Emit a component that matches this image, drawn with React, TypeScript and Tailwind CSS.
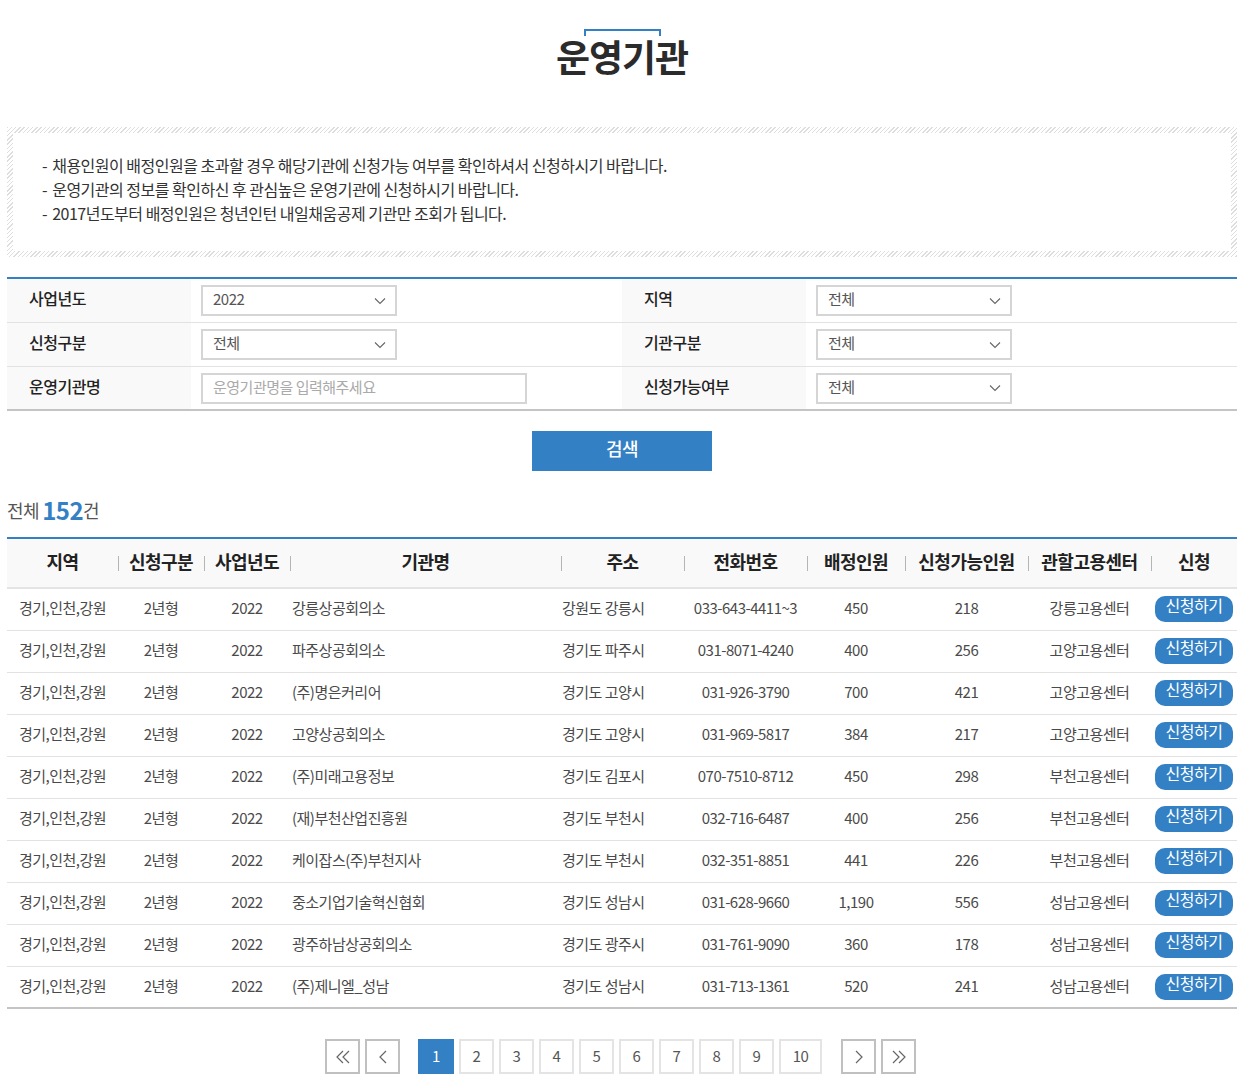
import React from "react";

const rows = [
  ["2022", "강릉상공회의소", "강원도 강릉시", "033-643-4411~3", "450", "218", "강릉고용센터"],
  ["2022", "파주상공회의소", "경기도 파주시", "031-8071-4240", "400", "256", "고양고용센터"],
  ["2022", "(주)명은커리어", "경기도 고양시", "031-926-3790", "700", "421", "고양고용센터"],
  ["2022", "고양상공회의소", "경기도 고양시", "031-969-5817", "384", "217", "고양고용센터"],
  ["2022", "(주)미래고용정보", "경기도 김포시", "070-7510-8712", "450", "298", "부천고용센터"],
  ["2022", "(재)부천산업진흥원", "경기도 부천시", "032-716-6487", "400", "256", "부천고용센터"],
  ["2022", "케이잡스(주)부천지사", "경기도 부천시", "032-351-8851", "441", "226", "부천고용센터"],
  ["2022", "중소기업기술혁신협회", "경기도 성남시", "031-628-9660", "1,190", "556", "성남고용센터"],
  ["2022", "광주하남상공회의소", "경기도 광주시", "031-761-9090", "360", "178", "성남고용센터"],
  ["2022", "(주)제니엘_성남", "경기도 성남시", "031-713-1361", "520", "241", "성남고용센터"],
];

const heads = [
  ["지역", "w-[111px]"],
  ["신청구분", "w-[86px]"],
  ["사업년도", "w-[86px]"],
  ["기관명", "w-[271px]"],
  ["주소", "w-[123px]"],
  ["전화번호", "w-[123px]"],
  ["배정인원", "w-[98px]"],
  ["신청가능인원", "w-[123px]"],
  ["관할고용센터", "w-[123px]"],
  ["신청", "w-[86px]"],
];

function FakeSelect({ value }: { value: string }) {
  return (
    <div className="flex h-[31px] w-[196px] items-center justify-between border-2 border-[#d5d5d5] pl-[10px] pr-[9px] text-[15px] text-[#555]">
      <span className="relative top-[-1px]">{value}</span>
      <svg width="12" height="8" viewBox="0 0 12 8" fill="none" stroke="#666" strokeWidth="1.1">
        <path d="M1 1.5 L6 6.5 L11 1.5" />
      </svg>
    </div>
  );
}

function Label({ children }: { children: React.ReactNode }) {
  return (
    <div className="flex items-center bg-[#f9f9f9] pb-[5px] pl-[22px] text-[16px] font-medium text-[#222]">
      {children}
    </div>
  );
}

function PageArrow({ d, className = "" }: { d: string; className?: string }) {
  return (
    <button className={`flex h-[35px] w-[35px] items-center justify-center border-2 border-[#c0c0c0] bg-white ${className}`}>
      <svg width="18" height="16" viewBox="0 0 18 16" fill="none" stroke="#666" strokeWidth="1.2">
        <path d={d} />
      </svg>
    </button>
  );
}

function Notice({ children }: { children: React.ReactNode }) {
  return (
    <p>
      <span className="mr-[2px]">-</span> {children}
    </p>
  );
}

export default function App() {
  return (
    <div className="h-[1085px] w-[1250px] overflow-hidden bg-white pl-[7px] font-['Noto_Sans_CJK_KR','Noto_Sans',sans-serif] tracking-[-0.5px] text-[#4a4a4a]">
      <div className="w-[1230px]">
        <div className="flex flex-col items-center pt-[29px]">
          <div className="h-[7px] w-[77px] border-x-2 border-t-2 border-[#3380c4]" />
          <h1 className="mt-[-8px] text-[37px] leading-[56px] font-bold tracking-[-1px] text-[#2b2b2b]">운영기관</h1>
        </div>

        <div className="mt-[43px] h-[130px] bg-[repeating-linear-gradient(135deg,#dedede_0,#dedede_1px,#ffffff_1px,#ffffff_3px)] p-[6px]">
          <div className="h-full bg-white pt-[20px] pl-[29px] text-[16px] leading-[24px] text-[#333]">
            <Notice>채용인원이 배정인원을 초과할 경우 해당기관에 신청가능 여부를 확인하셔서 신청하시기 바랍니다.</Notice>
            <Notice>운영기관의 정보를 확인하신 후 관심높은 운영기관에 신청하시기 바랍니다.</Notice>
            <Notice>2017년도부터 배정인원은 청년인턴 내일채움공제 기관만 조회가 됩니다.</Notice>
          </div>
        </div>

        <div className="mt-[20px] border-t-2 border-b-2 border-t-[#3380c4] border-b-[#c4c4c4]">
          <div className="grid h-[44px] grid-cols-[184px_431px_184px_431px] border-b border-[#e2e2e2]">
            <Label>사업년도</Label>
            <div className="flex items-center pl-[10px]"><FakeSelect value="2022" /></div>
            <Label>지역</Label>
            <div className="flex items-center pl-[10px]"><FakeSelect value="전체" /></div>
          </div>
          <div className="grid h-[44px] grid-cols-[184px_431px_184px_431px] border-b border-[#e2e2e2]">
            <Label>신청구분</Label>
            <div className="flex items-center pl-[10px]"><FakeSelect value="전체" /></div>
            <Label>기관구분</Label>
            <div className="flex items-center pl-[10px]"><FakeSelect value="전체" /></div>
          </div>
          <div className="grid h-[42px] grid-cols-[184px_431px_184px_431px]">
            <Label>운영기관명</Label>
            <div className="flex items-center pl-[10px]">
              <div className="flex h-[31px] w-[326px] items-center border-2 border-[#d5d5d5] pl-[10px] text-[15px] text-[#aaa]">
                <span className="relative top-[-1px]">운영기관명을 입력해주세요</span>
              </div>
            </div>
            <Label>신청가능여부</Label>
            <div className="flex items-center pl-[10px]"><FakeSelect value="전체" /></div>
          </div>
        </div>

        <div className="mt-[20px] flex justify-center">
          <button className="h-[40px] w-[180px] bg-[#3380c4] pb-[5px] text-[18px] font-medium text-white">검색</button>
        </div>

        <div className="mt-[22px] flex h-[34px] items-center text-[18px] text-[#555]">
          전체<span className="ml-[3px] text-[24px] font-bold text-[#3380c4]">152</span>건
        </div>

        <table className="mt-[10px] w-[1230px] table-fixed border-t-2 border-b-2 border-t-[#3380c4] border-b-[#c4c4c4]">
          <thead>
            <tr className="h-[50px] border-b-2 border-[#e4e4e4] bg-[#f9f9f9]">
              {heads.map(([name, width], i) => (
                <th key={name} className={`${width} relative pb-[3px] text-center text-[18px] font-bold text-[#222]`}>
                  {name}
                  {i < heads.length - 1 && (
                    <span className="absolute top-[17px] right-[-1px] h-[15px] w-px bg-[#b5b5b5]" />
                  )}
                </th>
              ))}
            </tr>
          </thead>
          <tbody>
            {rows.map((r, i) => (
              <tr key={i} className="h-[42px] border-b border-[#e2e2e2] text-center text-[15px] last:border-b-0">
                <td className="pb-[2px]">경기,인천,강원</td>
                <td className="pb-[2px]">2년형</td>
                <td className="pb-[2px]">{r[0]}</td>
                <td className="pb-[2px] pl-[2px] text-left">{r[1]}</td>
                <td className="pb-[2px] pl-[1px] text-left">{r[2]}</td>
                <td className="pb-[2px]">{r[3]}</td>
                <td className="pb-[2px]">{r[4]}</td>
                <td className="pb-[2px]">{r[5]}</td>
                <td className="pb-[2px]">{r[6]}</td>
                <td>
                  <button className="h-[26px] w-[78px] rounded-[10px] bg-[#3380c4] pb-[4px] text-[16px] leading-[20px] text-white">
                    <span className="relative top-[-2px]">신청하기</span>
                  </button>
                </td>
              </tr>
            ))}
          </tbody>
        </table>

        <div className="mt-[30px] flex items-center pl-[318px] text-[15px] text-[#555]">
          <div className="flex gap-[5px]">
            <PageArrow d="M9 2 L3 8 L9 14 M15 2 L9 8 L15 14" />
            <PageArrow d="M12 2 L6 8 L12 14" />
          </div>
          <div className="mr-[19px] ml-[18px] flex gap-[5px]">
            {["1", "2", "3", "4", "5", "6", "7", "8", "9", "10"].map((n, i) => (
              <button
                key={n}
                className={
                  i === 0
                    ? "h-[35px] w-[36px] bg-[#3380c4] text-white"
                    : n === "10"
                      ? "h-[35px] w-[43px] border-2 border-[#e4e4e4] bg-white"
                      : "h-[35px] w-[35px] border-2 border-[#e4e4e4] bg-white"
                }
              >
                {n}
              </button>
            ))}
          </div>
          <div className="flex gap-[5px]">
            <PageArrow d="M6 2 L12 8 L6 14" />
            <PageArrow d="M3 2 L9 8 L3 14 M9 2 L15 8 L9 14" />
          </div>
        </div>
      </div>
    </div>
  );
}
